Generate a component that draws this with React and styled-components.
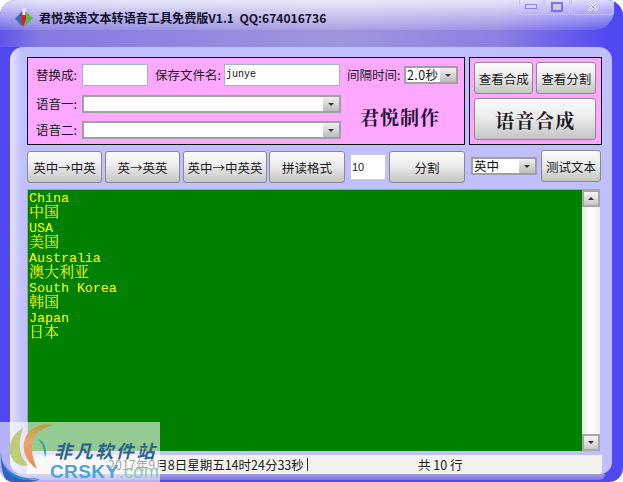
import React from "react";
import styled, { createGlobalStyle } from "styled-components";

const GlobalStyle = createGlobalStyle`
  html, body { margin: 0; padding: 0; background: #fff; overflow: hidden; }
  body { font-family: "Noto Sans CJK SC", "Liberation Sans", sans-serif; }
`;

const cjk = `"Noto Sans CJK SC", sans-serif`;
const serifCjk = `"Noto Serif CJK SC", "Noto Sans CJK SC", serif`;

const Window = styled.div`
  position: relative;
  width: 623px;
  height: 482px;
  box-sizing: border-box;
  display: flex;
  flex-direction: column;
  background: #5048f0;
  border-radius: 16px 16px 14px 14px;
  overflow: hidden;
`;

const TitleBar = styled.div`
  position: relative;
  height: 47px;
  flex: none;
  display: flex;
  align-items: flex-start;
  justify-content: space-between;
  padding: 0 9px 0 14px;
  box-sizing: border-box;
  background: linear-gradient(90deg, #5f56ea 0, #8379e2 40px, #a096de 340px, #8a80e2 500px, #5048f0 610px);
  &::before {
    content: "";
    position: absolute;
    left: 0;
    top: 0;
    right: 9px;
    height: 30px;
    border-radius: 0 0 20px 0;
    background: linear-gradient(180deg, rgba(255, 255, 255, 0.8), rgba(255, 255, 255, 0.12));
  }
`;

const TitleLeft = styled.div`
  position: relative;
  display: flex;
  align-items: center;
  gap: 5px;
  margin-top: 8px;
`;

const TitleText = styled.div`
  font: bold 12.1px/18px ${cjk};
  color: #12122a;
  white-space: pre;
`;

const Controls = styled.div`
  position: relative;
  display: flex;
  gap: 1px;
`;

const Control = styled.div`
  width: ${p => p.$w}px;
  height: 15px;
  box-sizing: border-box;
  border: 1px solid #c9c2ff;
  border-top: none;
  border-radius: 0 0 3px 3px;
  display: flex;
  align-items: center;
  justify-content: center;
`;

const Client = styled.div`
  flex: 1;
  margin: 0 11px 0 10px;
  padding: 10px 10px 0 17px;
  display: flex;
  flex-direction: column;
  border-radius: 13px 13px 12px 12px;
  background: linear-gradient(90deg, #e4e2ff 0, #c0c0ff 12px);
  min-height: 0;
`;

const TopRow = styled.div`
  display: flex;
  gap: 4px;
`;

const PinkPanel = styled.div`
  height: 88px;
  width: ${p => p.$w}px;
  box-sizing: border-box;
  background: #ffa8ff;
  border: 1px solid #101010;
  padding: ${p => p.$pad};
`;

const FormRow = styled.div`
  display: flex;
  align-items: center;
`;

const Label = styled.span`
  font: 12.5px/16px ${cjk};
  color: #1a1a1a;
  white-space: nowrap;
  width: ${p => p.$w}px;
  margin-left: ${p => p.$ml || 0}px;
`;

const TextInput = styled.div`
  width: ${p => p.$w}px;
  height: 22px;
  box-sizing: border-box;
  background: #fff;
  border: 1px solid #9ab4c8;
  font: 10px/20px "Liberation Mono", monospace;
  color: #111;
  padding-left: 1px;
`;

const Combo = styled.div`
  width: ${p => p.$w}px;
  height: 18px;
  flex: none;
  box-sizing: border-box;
  background: #fff;
  border: 2px solid #a0a0a0;
  display: flex;
  align-items: stretch;
  margin: ${p => p.$margin || 0};
`;

const ComboValue = styled.span`
  font: 12.5px/14px ${cjk};
  color: #111;
  letter-spacing: ${p => p.$ls || 0}px;
  padding-left: 1px;
  white-space: nowrap;
`;

const ComboArrow = styled.span`
  width: 16px;
  margin-left: auto;
  background: linear-gradient(180deg, #f0f0f0, #bcbcbc);
  display: flex;
  align-items: center;
  justify-content: center;
  &::before {
    content: "";
    border: 3px solid transparent;
    border-top: 3px solid #333;
    border-bottom: none;
  }
`;

const LowerForm = styled.div`
  display: flex;
`;

const ComboStack = styled.div`
  display: flex;
  flex-direction: column;
  gap: 8px;
  margin-top: 9px;
`;

const Brand = styled.div`
  flex: 1;
  text-align: center;
  font: bold 19px/24px ${serifCjk};
  letter-spacing: 1px;
  color: #1c1438;
  padding: 19px 5px 0 0;
`;

const Button = styled.button`
  width: ${p => p.$w}px;
  height: ${p => p.$h || 32}px;
  flex: none;
  padding: 0;
  box-sizing: border-box;
  border: 1px solid #8a8a8a;
  border-radius: 3px;
  background: linear-gradient(180deg, #fbfbfb 0%, #ececec 45%, #c4c4c4 100%);
  font: ${p => (p.$big ? `bold 19px ${serifCjk}` : `12.5px ${cjk}`)};
  letter-spacing: ${p => (p.$big ? 1 : 0)}px;
  color: #1c1c1c;
  margin: ${p => p.$margin || 0};
`;

const SideButtons = styled.div`
  display: grid;
  grid-template-columns: 59px 60px;
  gap: 4px 3px;
`;

const Wide = styled.div`
  grid-column: 1 / 3;
`;

const ToolRow = styled.div`
  display: flex;
  align-items: flex-start;
  margin-top: 6px;
  height: 32px;
`;

const CountInput = styled.div`
  width: 36px;
  height: 26px;
  box-sizing: border-box;
  margin: 3px 3px 0 5px;
  background: #fff;
  border: 1px solid #c8c8d8;
  font: 11px/24px "Liberation Sans", sans-serif;
  color: #222;
  padding-left: 1px;
`;

const TextArea = styled.div`
  margin-top: 6px;
  height: 262px;
  width: 573px;
  display: flex;
  box-sizing: border-box;
  border-top: 1px solid #a0a0a8;
  border-left: 1px solid #a0a0a8;
  background: #008000;
`;

const Lines = styled.div`
  flex: 1;
  padding: 1px 0 0 1px;
`;

const Line = styled.div`
  height: 15px;
  white-space: pre;
  color: #ffff00;
  line-height: ${p => (p.$zh ? 9 : 15)}px;
  font-family: ${p => (p.$zh ? serifCjk : `"Liberation Mono", monospace`)};
  font-size: ${p => (p.$zh ? 15 : 13.3)}px;
`;

const Scrollbar = styled.div`
  width: 18px;
  display: flex;
  flex-direction: column;
  justify-content: space-between;
  box-sizing: border-box;
  background: linear-gradient(90deg, #e8e8e8, #ffffff 45%, #f0f0f0);
`;

const ScrollButton = styled.div`
  height: 17px;
  background: linear-gradient(180deg, #f6f6f6, #c8c8c8);
  border: 2px solid #a8a8a8;
  box-sizing: border-box;
  display: flex;
  align-items: center;
  justify-content: center;
  &::before {
    content: "";
    border: 3px solid transparent;
    ${p => (p.$up ? "border-bottom: 3px solid #333; border-top: none;" : "border-top: 3px solid #333; border-bottom: none;")}
  }
`;

const StatusBar = styled.div`
  margin-top: 4px;
  width: 575px;
  height: 19px;
  display: flex;
  background: #f3f1ec;
  font: 12.5px/19px ${cjk};
  color: #222;
`;

const StatusTime = styled.div`
  width: 281px;
  box-sizing: border-box;
  padding-left: 81px;
  white-space: nowrap;
  position: relative;
  &::after {
    content: "";
    position: absolute;
    right: 0;
    top: 3px;
    bottom: 3px;
    width: 1px;
    background: #333;
  }
`;

const StatusCount = styled.div`
  flex: 1;
  padding-left: 110px;
  white-space: pre;
`;

const BottomEdge = styled.div`
  height: 6px;
  flex: none;
  margin: 0 18px 2px 10px;
  border-radius: 0 0 10px 0;
  background: linear-gradient(180deg, #a49ae6, #7f74de);
`;

const Watermark = styled.div`
  position: absolute;
  left: 0;
  top: 422px;
  width: 160px;
  height: 60px;
  background: rgba(255, 255, 255, 0.58);
`;

const MarkName = styled.div`
  position: absolute;
  left: 54px;
  top: 17px;
  font: italic bold 18px/22px ${cjk};
  letter-spacing: 2.6px;
  color: #2a6488;
  white-space: nowrap;
`;

const MarkSite = styled.div`
  position: absolute;
  left: 50px;
  top: 39px;
  font: bold 19px/21px "Liberation Sans", sans-serif;
  letter-spacing: 0.4px;
  color: #4fa3dc;
  white-space: nowrap;
`;

const MarkDomain = styled.span`
  font-weight: normal;
  color: #86c8c0;
  font-size: 18px;
`;

const MarkLogo = styled.svg`
  position: absolute;
  left: 0;
  top: 0;
`;

function AppIcon() {
  return (
    <svg width="20" height="20" viewBox="0 0 20 20">
      <path d="M1 11 L8 3 L8 18 Z" fill="#3a6fb0" />
      <path d="M11 3 L19 10 L11 18 Z" fill="#56b848" />
      <path d="M8 4 L12 4 L12 12 L9 19 L7 14 Z" fill="#e02020" />
      <path d="M8.5 0.5 L11.5 0.5 L11.5 7 L8.5 7 Z" fill="#f4f0f8" />
    </svg>
  );
}

function MinIcon() {
  return (
    <svg width="12" height="6" viewBox="0 0 12 6">
      <rect x="0.5" y="0.5" width="11" height="4" fill="#d8d4ff" stroke="#8f84ea" />
    </svg>
  );
}

function MaxIcon() {
  return (
    <svg width="12" height="10" viewBox="0 0 12 10">
      <rect x="1" y="1" width="10" height="8" fill="none" stroke="#7f72e6" strokeWidth="2" />
    </svg>
  );
}

function CloseIcon() {
  return (
    <svg width="12" height="10" viewBox="0 0 12 10">
      <path d="M1.5 1 L10.5 9 M10.5 1 L1.5 9" stroke="#f2f0ff" strokeWidth="2.6" />
      <path d="M1.5 1 L10.5 9 M10.5 1 L1.5 9" stroke="#8a7eea" strokeWidth="0.8" />
    </svg>
  );
}

function SiteLogo() {
  return (
    <MarkLogo width="60" height="60" viewBox="0 0 60 60">
      <defs>
        <linearGradient id="crescent" x1="0" y1="0" x2="0" y2="1">
          <stop offset="0" stopColor="#b8a040" />
          <stop offset="0.4" stopColor="#e8a870" />
          <stop offset="1" stopColor="#e88850" />
        </linearGradient>
      </defs>
      <path d="M1 28 C0 48 16 62 40 57 C36 60 28 60 20 60 L8 60 C2 54 0 40 1 28 Z" fill="#2a62c8" />
      <path d="M3 38 C6 50 20 58 38 56 C22 62 6 54 3 38 Z" fill="#2090c8" />
      <path d="M23 6 C10 13 6 28 13 38 C17 43 24 45 28 43 C20 36 17 22 23 6 Z" fill="#c0cc78" />
      <path d="M53 3 C40 0 27 7 24 20 C22 32 29 42 37 47 C33 37 29 25 35 14 C39 8 46 5 53 3 Z" fill="url(#crescent)" />
      <path d="M38 17 C44 18 48 28 45 36 C44 28 43 22 38 17 Z" fill="#30a8a0" />
    </MarkLogo>
  );
}

const lines = [
  ["China"], ["中国", true], ["USA"], ["美国", true], ["Australia"],
  ["澳大利亚", true], ["South Korea"], ["韩国", true], ["Japan"], ["日本", true]
];

export default function App() {
  return (
    <Window>
      <GlobalStyle />
      <TitleBar>
        <TitleLeft>
          <AppIcon />
          <TitleText>君悦英语文本转语音工具免费版V1.1  QQ:674016736</TitleText>
        </TitleLeft>
        <Controls>
          <Control $w={24}><MinIcon /></Control>
          <Control $w={26}><MaxIcon /></Control>
          <Control $w={43}><CloseIcon /></Control>
        </Controls>
      </TitleBar>
      <Client>
        <TopRow>
          <PinkPanel $w={439} $pad="6px 0 0 8px">
            <FormRow>
              <Label $w={46}>替换成:</Label>
              <TextInput $w={66} />
              <Label $w={69} $ml={7}>保存文件名:</Label>
              <TextInput $w={116}>junye</TextInput>
              <Label $w={57} $ml={7}>间隔时间:</Label>
              <Combo $w={54}>
                <ComboValue $ls={0.4}>2.0秒</ComboValue>
                <ComboArrow />
              </Combo>
            </FormRow>
            <LowerForm>
              <ComboStack>
                <FormRow>
                  <Label $w={46}>语音一:</Label>
                  <Combo $w={259}><ComboArrow /></Combo>
                </FormRow>
                <FormRow>
                  <Label $w={46}>语音二:</Label>
                  <Combo $w={259}><ComboArrow /></Combo>
                </FormRow>
              </ComboStack>
              <Brand>君悦制作</Brand>
            </LowerForm>
          </PinkPanel>
          <PinkPanel $w={133} $pad="4px 0 0 4px">
            <SideButtons>
              <Button $w={59}>查看合成</Button>
              <Button $w={60}>查看分割</Button>
              <Wide>
                <Button $w={122} $h={42} $big>语音合成</Button>
              </Wide>
            </SideButtons>
          </PinkPanel>
        </TopRow>
        <ToolRow>
          <Button $w={75}>英中→中英</Button>
          <Button $w={75} $margin="0 0 0 3px">英→英英</Button>
          <Button $w={84} $margin="0 0 0 3px">英中→中英英</Button>
          <Button $w={76} $margin="0 0 0 2px">拼读格式</Button>
          <CountInput>10</CountInput>
          <Button $w={76}>分割</Button>
          <Combo $w={66} $margin="6px 0 0 6px">
            <ComboValue>英中</ComboValue>
            <ComboArrow />
          </Combo>
          <Button $w={60} $margin="-1px 0 0 4px">测试文本</Button>
        </ToolRow>
        <TextArea>
          <Lines>
            {lines.map(([text, zh]) => (
              <Line key={text} $zh={zh}>{text}</Line>
            ))}
          </Lines>
          <Scrollbar>
            <ScrollButton $up />
            <ScrollButton />
          </Scrollbar>
        </TextArea>
        <StatusBar>
          <StatusTime>2017年9月8日星期五14时24分33秒</StatusTime>
          <StatusCount>共 10 行</StatusCount>
        </StatusBar>
      </Client>
      <BottomEdge />
      <Watermark>
        <SiteLogo />
        <MarkName>非凡软件站</MarkName>
        <MarkSite>CRSKY<MarkDomain>.com</MarkDomain></MarkSite>
      </Watermark>
    </Window>
  );
}
